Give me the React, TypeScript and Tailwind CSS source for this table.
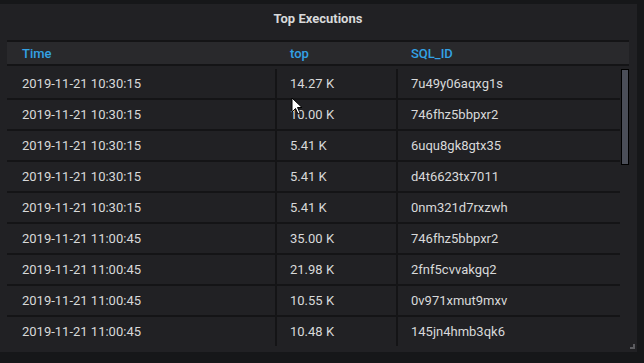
const rows = [
  { time: '2019-11-21 10:30:15', top: '14.27 K', sqlId: '7u49y06aqxg1s' },
  { time: '2019-11-21 10:30:15', top: '10.00 K', sqlId: '746fhz5bbpxr2' },
  { time: '2019-11-21 10:30:15', top: '5.41 K', sqlId: '6uqu8gk8gtx35' },
  { time: '2019-11-21 10:30:15', top: '5.41 K', sqlId: 'd4t6623tx7011' },
  { time: '2019-11-21 10:30:15', top: '5.41 K', sqlId: '0nm321d7rxzwh' },
  { time: '2019-11-21 11:00:45', top: '35.00 K', sqlId: '746fhz5bbpxr2' },
  { time: '2019-11-21 11:00:45', top: '21.98 K', sqlId: '2fnf5cvvakgq2' },
  { time: '2019-11-21 11:00:45', top: '10.55 K', sqlId: '0v971xmut9mxv' },
  { time: '2019-11-21 11:00:45', top: '10.48 K', sqlId: '145jn4hmb3qk6' },
];

export default function App() {
  return (
    <div className="w-[644px] h-[363px] bg-[#161719] pt-1 overflow-hidden font-['Roboto',sans-serif] text-[13px] text-[#d8d9da]">
      <div className="relative w-[637px] h-[348px] bg-[#212124] pl-[7px] pr-2">
        {/* Title */}
        <div className="h-9 pb-[7px] flex items-center justify-center text-[13px] font-bold text-[#d8d9da]">
          Top Executions
        </div>

        {/* Header */}
        <div className="flex h-[26px] pt-px bg-[#29292c] border-y-2 border-[#141416] text-[#33a2e5] font-medium">
          <div className="w-[270px] pl-[15px] flex items-center">Time</div>
          <div className="w-[121px] pl-[13px] flex items-center">top</div>
          <div className="flex-1 pl-[13px] flex items-center">SQL_ID</div>
        </div>

        {/* Body */}
        <div className="flex pt-[3px]">
          <div className="w-[613px]">
            {rows.map((r, i) => (
              <div
                key={i}
                className={`flex h-[29px] ${i < rows.length - 1 ? 'border-b-2 border-[#141416] h-[31px]' : ''}`}
              >
                <div className="w-[268px] pl-[15px] flex items-center">{r.time}</div>
                <div className="w-[121px] pl-[13px] flex items-center border-l-2 border-[#141416]">{r.top}</div>
                <div className="flex-1 pl-[13px] flex items-center border-l-2 border-[#141416]">{r.sqlId}</div>
              </div>
            ))}
          </div>
          {/* Scrollbar */}
          <div className="ml-[1px] w-2 h-[96px] bg-[#4b4e58] border border-black" />
        </div>

        {/* Resize handle */}
        <div className="absolute right-[2px] bottom-[3px] w-[5px] h-[5px] border-r-2 border-b-2 border-[#5c5c60]" />

        {/* Mouse cursor */}
        <svg className="absolute left-[291px] top-[93px]" width="12" height="18" viewBox="0 0 12 18">
          <path d="M1 1 L1 15 L4.5 11.5 L7 17 L9 16 L6.5 10.5 L11 10.5 Z" fill="#fff" stroke="#000" strokeWidth="1" />
        </svg>
      </div>
    </div>
  );
}
